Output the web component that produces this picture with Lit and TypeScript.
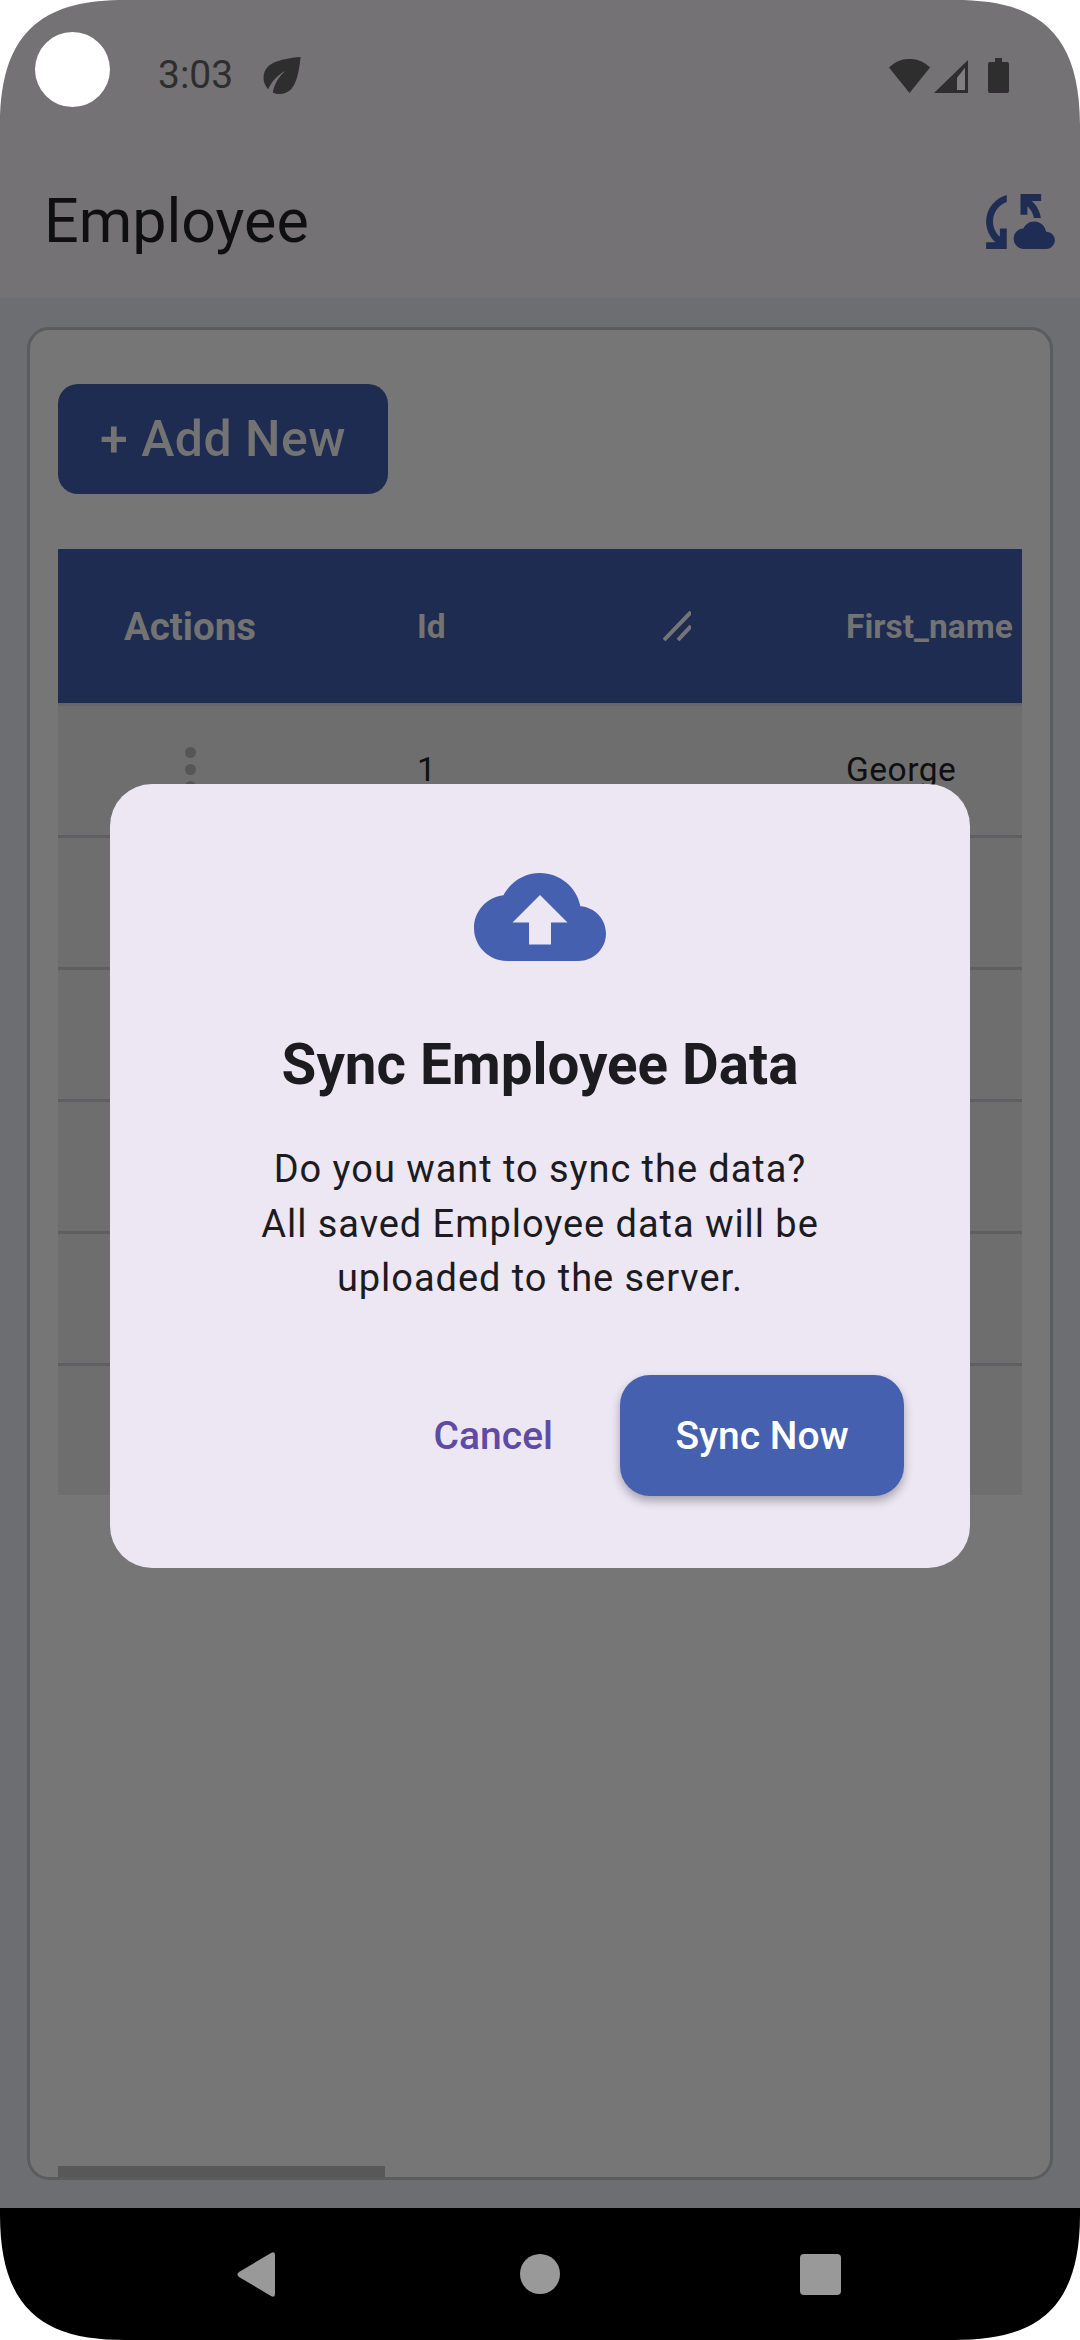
import { LitElement, html, css, svg } from 'lit';
import { customElement } from 'lit/decorators.js';

const CLOUD_SYNC =
  'M21.5,14.98c-0.02,0-0.03,0-0.05,0.01C21.2,13.3,19.76,12,18,12c-1.4,0-2.6,0.83-3.16,2.02C13.26,14.1,12,15.4,12,17c0,1.66,1.34,3,3,3l6.5-0.02c1.38,0,2.5-1.12,2.5-2.5S22.88,14.98,21.5,14.98z M10,4.26v2.09C7.67,7.18,6,9.39,6,12c0,1.77,0.78,3.34,2,4.44V14h2v6H4v-2h2.73C5.06,16.54,4,14.4,4,12C4,8.27,6.55,5.15,10,4.26z M20,6h-2.73c1.43,1.26,2.41,3.01,2.66,5l-2.02,0c-0.23-1.36-0.93-2.55-1.91-3.44V10h-2V4h6V6z';
const CLOUD_UPLOAD =
  'M19.35 10.04C18.67 6.59 15.64 4 12 4 9.11 4 6.6 5.64 5.35 8.04 2.34 8.36 0 10.91 0 14c0 3.31 2.69 6 6 6h13c2.76 0 5-2.24 5-5 0-2.64-2.05-4.78-4.65-4.96zM14 13v4h-4v-4H7l5-5 5 5h-3z';
const LEAF =
  'M6.05 8.05c-2.73 2.73-2.73 7.15-.02 9.88 1.47-3.4 4.09-6.24 7.36-7.93-2.77 2.34-4.71 5.61-5.39 9.32 2.6 1.23 5.8.78 7.95-1.37C19.43 14.47 20 4 20 4S9.53 4.57 6.05 8.05z';

// rows below the first one are covered by the dialog, only the stripes show
const EMPTY_ROWS = [0, 1, 2, 3, 4];

@customElement('app-root')
export class AppRoot extends LitElement {
  static override styles = css`
    :host {
      display: block;
      position: relative;
      width: 1080px;
      height: 2340px;
      overflow: hidden;
      background: #fff;
      font-family: Roboto, 'Liberation Sans', sans-serif;
    }

    .screen {
      display: flex;
      flex-direction: column;
      height: 100%;
    }

    .top {
      flex: none;
      height: 298px;
      background: #747275;
      display: flex;
      flex-direction: column;
    }

    .status {
      height: 150px;
      display: flex;
      align-items: center;
      padding: 0 71px 0 158px;
      color: #2e2e2e;
    }

    .time {
      font-size: 39px;
      font-weight: 400;
      line-height: 44px;
      width: 105px;
    }

    .status svg {
      display: block;
      flex: none;
      fill: #2e2e2e;
    }

    .status-right {
      margin-left: auto;
      display: flex;
      align-items: flex-end;
      gap: 4px;
    }

    .battery {
      margin-left: 16px;
    }

    .appbar {
      flex: 1;
      display: flex;
      align-items: center;
      justify-content: space-between;
      padding: 0 25px 6px 44px;
    }

    .title {
      font-size: 61px;
      font-weight: 400;
      color: #0f0f11;
      line-height: 72px;
    }

    .appbar svg {
      display: block;
      fill: #1f2d55;
    }

    .body {
      flex: 1;
      min-height: 0;
      background: #6d6e72;
      padding: 29px 27px 28px;
      display: flex;
    }

    .card {
      flex: 1;
      box-sizing: border-box;
      border: 3px solid #5c5c5f;
      border-radius: 22px;
      background: #767676;
      padding: 54px 28px 0;
      display: flex;
      flex-direction: column;
    }

    .add {
      align-self: flex-start;
      width: 330px;
      height: 110px;
      border-radius: 20px;
      background: #1f2c51;
      color: #737373;
      display: flex;
      align-items: center;
      justify-content: center;
      font-size: 50px;
      font-weight: 500;
      letter-spacing: 0.5px;
    }

    .table {
      margin-top: 55px;
    }

    .row {
      display: grid;
      grid-template-columns: 264px 524px 1fr;
      align-items: center;
      box-sizing: border-box;
      height: 132px;
      padding-bottom: 2px;
      background: #6e6e6e;
      border-bottom: 3px solid #5f5f62;
      font-size: 33.5px;
      letter-spacing: 0.5px;
      color: #0f0f11;
    }

    .row:last-child {
      height: 129px;
      border-bottom: 0;
    }

    .row.head {
      height: 157px;
      padding-bottom: 0;
      background: #1f2c51;
      border-bottom: 3px solid #666668;
      color: #737373;
      font-size: 33.5px;
      font-weight: 700;
      letter-spacing: 0;
    }

    .row.head .cell-actions {
      font-size: 38.500px;
    }

    .cell-actions {
      display: flex;
      justify-content: center;
    }

    .cell-id {
      padding: 0 155px 0 95px;
      display: flex;
      align-items: center;
      justify-content: space-between;
    }

    .resize {
      display: block;
      stroke: #757575;
      stroke-width: 4;
    }

    .dots {
      display: flex;
      flex-direction: column;
      gap: 6px;
    }

    .dots span {
      width: 11px;
      height: 11px;
      border-radius: 50%;
      background: #565656;
    }

    .scrollbar {
      margin-top: auto;
      width: 327px;
      height: 11px;
      background: #585858;
    }

    .nav {
      flex: none;
      height: 132px;
      background: #000;
      display: grid;
      grid-template-columns: 237px 38px 245px 40px 240px 41px;
      padding-top: 44px;
      box-sizing: border-box;
      align-items: start;
    }

    .nav svg {
      display: block;
      fill: #999;
      grid-column: 2;
    }

    .nav i {
      display: block;
      background: #999;
    }

    .nav .home {
      grid-column: 4;
      height: 40px;
      margin-top: 2px;
      border-radius: 50%;
    }

    .nav .recent {
      grid-column: 6;
      height: 41px;
      margin-top: 2px;
      border-radius: 4px;
    }

    .camera {
      position: absolute;
      left: 35px;
      top: 32px;
      width: 75px;
      height: 75px;
      border-radius: 50%;
      background: #fff;
    }

    .corner {
      position: absolute;
      width: 125px;
      height: 125px;
      fill: #fff;
    }

    .corner.tl { left: 0; top: 0; }
    .corner.tr { right: 0; top: 0; transform: scaleX(-1); }
    .corner.bl { left: 0; bottom: 0; transform: scaleY(-1); }
    .corner.br { right: 0; bottom: 0; transform: scale(-1); }

    .dialog {
      position: absolute;
      left: 110px;
      top: 784px;
      width: 860px;
      height: 784px;
      box-sizing: border-box;
      padding: 89px 66px 72px;
      border-radius: 42px;
      background: #ede7f4;
      display: flex;
      flex-direction: column;
      align-items: center;
    }

    .dialog svg {
      display: block;
      flex: none;
      fill: #4660b0;
      fill-rule: evenodd;
    }

    .dialog h2 {
      margin: 72px 0 0;
      font-size: 56.500px;
      line-height: 64px;
      font-weight: 700;
      color: #1c1b1f;
    }

    .dialog p {
      margin: 45px 0 0;
      font-size: 38px;
      line-height: 54.5px;
      letter-spacing: 0.95px;
      text-align: center;
      color: #1c1b1f;
    }

    .actions {
      margin-top: auto;
      align-self: stretch;
      display: flex;
      justify-content: flex-end;
      align-items: center;
      gap: 67px;
    }

    .cancel {
      font-size: 39px;
      font-weight: 500;
      color: #5f4ba3;
    }

    .sync {
      width: 284px;
      height: 121px;
      border-radius: 30px;
      background: #4660b0;
      color: #fff;
      font-size: 39px;
      font-weight: 500;
      display: flex;
      align-items: center;
      justify-content: center;
      box-shadow: 0 5px 10px rgba(0, 0, 0, 0.3);
    }
  `;

  private _corner(pos: string) {
    return html`<svg class="corner ${pos}" viewBox="0 0 125 125">
      <path d="M0 0H125C50 0 0 25 0 125Z" />
    </svg>`;
  }

  private _statusIcons() {
    return html`
      <div class="status-right">
        <svg width="41" height="34" viewBox="0 0 41 34">
          <path d="M0 8.5C12-3 29-3 41 8.5L20.5 34Z" />
        </svg>
        <svg width="34" height="33" viewBox="0 0 34 33">
          <path d="M0 33L34 0V33Z" />
          <path d="M23 17.7L31 7.7V30H23Z" style="fill:#807e80" />
        </svg>
        <svg class="battery" width="21" height="35" viewBox="0 0 21 35">
          <path d="M7 0H14V4H19Q21 4 21 6V33Q21 35 19 35H2Q0 35 0 33V6Q0 4 2 4H7Z" />
        </svg>
      </div>
    `;
  }

  override render() {
    return html`
      <div class="screen">
        <div class="top">
          <div class="status">
            <span class="time">3:03</span>
            <svg width="38" height="37" viewBox="4 4 16 16"><path d=${LEAF} /></svg>
            ${this._statusIcons()}
          </div>
          <div class="appbar">
            <span class="title">Employee</span>
            <svg width="69" height="55" viewBox="4 4 20 16"><path d=${CLOUD_SYNC} /></svg>
          </div>
        </div>

        <div class="body">
          <div class="card">
            <div class="add">+ Add New</div>
            <div class="table">
              <div class="row head">
                <div class="cell-actions">Actions</div>
                <div class="cell-id">
                  <span>Id</span>
                  <svg class="resize" width="28" height="30" viewBox="0 0 28 30">
                    ${svg`<path d="M1 29L28 1M15 29L28 15" fill="none" />`}
                  </svg>
                </div>
                <div>First_name</div>
              </div>
              <div class="row">
                <div class="cell-actions">
                  <div class="dots"><span></span><span></span><span></span></div>
                </div>
                <div class="cell-id"><span>1</span></div>
                <div>George</div>
              </div>
              ${EMPTY_ROWS.map(() => html`<div class="row"></div>`)}
            </div>
            <div class="scrollbar"></div>
          </div>
        </div>

        <div class="nav">
          <svg width="38" height="45" viewBox="0 0 38 45">
            <path d="M2 20L34 1Q38 -1 38 3V42Q38 46 34 44L2 25Q-1 22.500 2 20Z" />
          </svg>
          <i class="home"></i>
          <i class="recent"></i>
        </div>
      </div>

      <div class="camera"></div>
      ${this._corner('tl')} ${this._corner('tr')} ${this._corner('bl')} ${this._corner('br')}

      <div class="dialog">
        <svg width="132" height="88" viewBox="0 4 24 16"><path d=${CLOUD_UPLOAD} /></svg>
        <h2>Sync Employee Data</h2>
        <p>Do you want to sync the data?<br />All saved Employee data will be<br />uploaded to the server.</p>
        <div class="actions">
          <span class="cancel">Cancel</span>
          <div class="sync">Sync Now</div>
        </div>
      </div>
    `;
  }
}

declare global {
  interface HTMLElementTagNameMap {
    'app-root': AppRoot;
  }
}
